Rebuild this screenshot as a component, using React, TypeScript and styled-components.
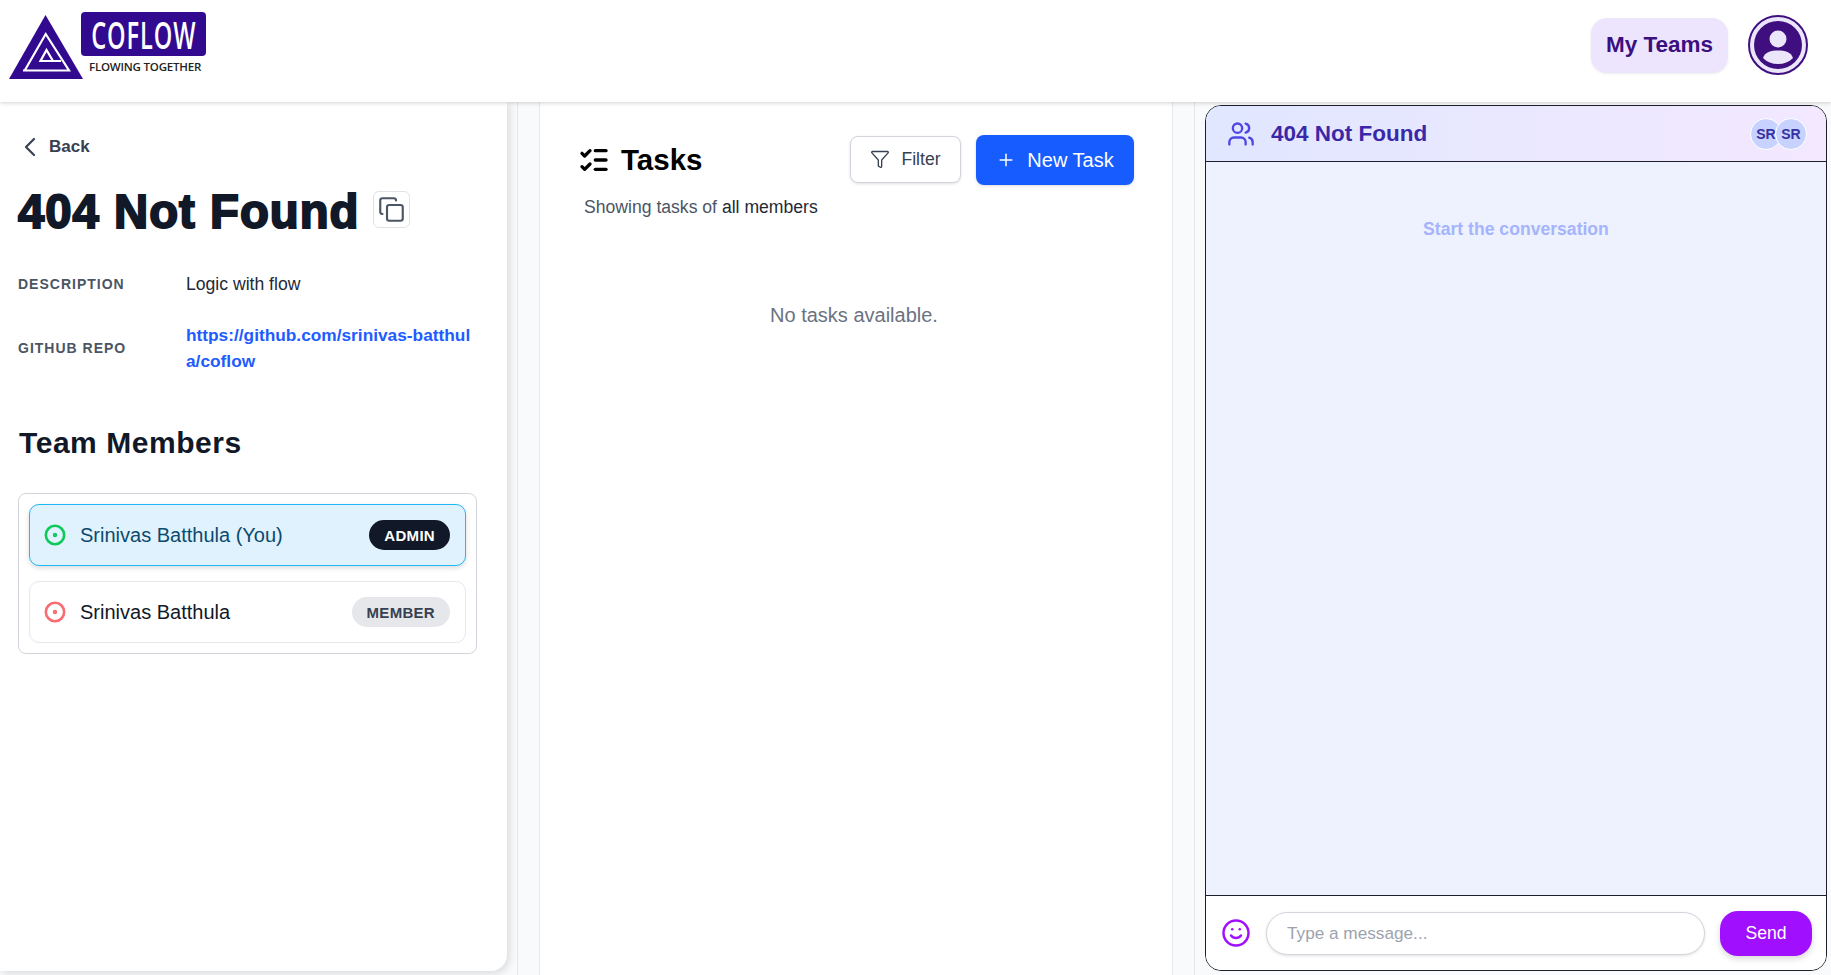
import React from "react";
import styled, { createGlobalStyle } from "styled-components";
import { ChevronLeft, Copy, CircleDot, ListChecks, Funnel, Plus, Users, Smile } from "lucide-react";

const Global = createGlobalStyle`
  html, body { margin: 0; padding: 0; height: 100%; }
  body { font-family: "Liberation Sans", Arial, sans-serif; background: #fff; overflow: hidden; }
  * { box-sizing: border-box; }
`;

const Page = styled.div`
  width: 1831px;
  height: 975px;
  display: flex;
  flex-direction: column;
  overflow: hidden;
`;

const NavBar = styled.header`
  height: 102px;
  flex: none;
  display: flex;
  align-items: flex-start;
  justify-content: space-between;
  padding: 12px 23px 0 9px;
  background: #fff;
  box-shadow: 0 1px 4px rgba(0, 0, 0, 0.18);
  position: relative;
  z-index: 3;
`;

const Logo = styled.div`
  display: flex;
  align-items: flex-start;
`;

const LogoMark = styled.svg`
  width: 74px;
  height: 66px;
  margin-top: 3px;
  flex: none;
`;

const LogoWords = styled.div`
  display: flex;
  flex-direction: column;
  margin-left: -2px;
`;

const LogoPlate = styled.div`
  width: 125px;
  height: 44px;
  background: #320a8f;
  border-radius: 4px;
  color: #fff;
  display: flex;
  align-items: center;
  justify-content: center;
`;

const LogoName = styled.span`
  flex: none;
  font-family: "Open Sans", sans-serif;
  font-size: 38px;
  font-weight: 600;
  letter-spacing: 1.5px;
  line-height: 1;
  transform: scaleX(0.62);
  white-space: nowrap;
`;

const LogoTag = styled.span`
  font-family: "Open Sans", sans-serif;
  font-size: 11.5px;
  font-weight: 600;
  color: #222;
  margin: 3px 0 0 8px;
  white-space: nowrap;
  letter-spacing: -0.2px;
`;

const NavActions = styled.div`
  display: flex;
  align-items: center;
  gap: 20px;
  margin-top: 3px;
`;

const TeamsButton = styled.button`
  width: 137px;
  height: 55px;
  border: none;
  border-radius: 16px;
  background: #ede5fd;
  color: #3b0f80;
  font: 700 22.5px "Liberation Sans", Arial, sans-serif;
  box-shadow: 0 1px 3px rgba(0, 0, 0, 0.08);
`;

const AvatarRing = styled.div`
  width: 60px;
  height: 60px;
  border-radius: 50%;
  border: 2px solid #3f0f80;
  background: #ece6fb;
  display: flex;
  align-items: center;
  justify-content: center;
`;

const Body = styled.main`
  flex: 1;
  display: flex;
  min-height: 0;
  background: #f9fafb;
`;

const LeftPanel = styled.aside`
  width: 507px;
  height: 869px;
  flex: none;
  background: #fff;
  border-bottom-right-radius: 16px;
  box-shadow: 2px 2px 8px rgba(0, 0, 0, 0.14);
  padding: 33px 30px 0 18px;
`;

const BackLink = styled.div`
  display: flex;
  align-items: center;
  gap: 3px;
  margin-left: -4px;
  height: 24px;
  color: #374151;
  font-size: 17px;
  font-weight: 700;
  svg { flex: none; }
`;

const TitleRow = styled.div`
  display: flex;
  align-items: center;
  gap: 14px;
  margin-top: 28px;
  height: 50px;
`;

const Title = styled.h1`
  margin: 0;
  font-size: 47.3px;
  font-weight: 700;
  line-height: 50px;
  letter-spacing: 1px;
  color: #111827;
  -webkit-text-stroke: 2px #111827;
  white-space: nowrap;
`;

const CopyButton = styled.button`
  width: 37px;
  height: 37px;
  margin-top: -6px;
  padding: 0;
  display: flex;
  align-items: center;
  justify-content: center;
  background: #fff;
  border: 1px solid #e0e2e7;
  border-radius: 6px;
  color: #4b5563;
`;

const InfoGrid = styled.dl`
  display: grid;
  grid-template-columns: 168px 288px;
  row-gap: 25px;
  align-items: center;
  margin: 34px 0 0;
`;

const InfoLabel = styled.dt`
  font-size: 14px;
  font-weight: 700;
  letter-spacing: 1px;
  color: #4b5563;
`;

const InfoValue = styled.dd`
  margin: 0;
  font-size: 17.6px;
  line-height: 26px;
  color: #1f2937;
`;

const RepoLink = styled.a`
  color: #1d5cff;
  font-size: 17.3px;
  font-weight: 700;
  word-break: break-all;
  text-decoration: none;
`;

const SectionTitle = styled.h2`
  margin: 51px 0 0 1px;
  font-size: 30px;
  line-height: 36px;
  font-weight: 700;
  letter-spacing: 0.55px;
  color: #111827;
`;

const MemberBox = styled.div`
  margin-top: 32px;
  width: 459px;
  padding: 10px;
  border: 1px solid #d1d5db;
  border-radius: 8px;
  display: flex;
  flex-direction: column;
  gap: 15px;
`;

const MemberRow = styled.div<{ $self?: boolean }>`
  height: 62px;
  display: flex;
  align-items: center;
  padding: 0 15px 0 14px;
  border-radius: 10px;
  border: 1px solid ${(p) => (p.$self ? "#22b8f5" : "#e5e7eb")};
  background: ${(p) => (p.$self ? "#e0f2fe" : "#fff")};
  box-shadow: ${(p) => (p.$self ? "0 2px 5px rgba(0,0,0,0.15)" : "none")};
`;

const MemberName = styled.span<{ $self?: boolean }>`
  margin-left: 14px;
  flex: 1;
  font-size: 20px;
  color: ${(p) => (p.$self ? "#0c4a6e" : "#111827")};
`;

const RoleBadge = styled.span<{ $admin?: boolean }>`
  height: 30px;
  padding: 0 15px;
  border-radius: 15px;
  display: flex;
  align-items: center;
  font-size: 15px;
  font-weight: 700;
  letter-spacing: 0.3px;
  background: ${(p) => (p.$admin ? "#111827" : "#e5e7eb")};
  color: ${(p) => (p.$admin ? "#fff" : "#374151")};
`;

const MiddleGutter = styled.section`
  margin-left: 10px;
  width: 678px;
  flex: none;
  padding: 0 21px;
  border-left: 1px solid #e5e7eb;
  border-right: 1px solid #e5e7eb;
`;

const TaskCard = styled.div`
  height: 100%;
  background: #fff;
  border-left: 1px solid #e5e7eb;
  border-right: 1px solid #e5e7eb;
  padding: 33px 38px 0 41px;
`;

const TaskHeader = styled.div`
  display: flex;
  align-items: center;
  justify-content: space-between;
`;

const TaskTitle = styled.h2`
  margin: 0 0 0 -3px;
  display: flex;
  align-items: center;
  gap: 11px;
  font-size: 29.5px;
  font-weight: 700;
  color: #000;
`;

const TaskActions = styled.div`
  display: flex;
  align-items: center;
  gap: 15px;
`;

const FilterButton = styled.button`
  width: 111px;
  height: 47px;
  margin-bottom: 2px;
  display: flex;
  align-items: center;
  justify-content: center;
  gap: 11px;
  background: #fff;
  border: 1px solid #d1d5db;
  border-radius: 8px;
  box-shadow: 0 1px 3px rgba(0, 0, 0, 0.12);
  color: #374151;
  font: 400 17.6px "Liberation Sans", Arial, sans-serif;
`;

const NewTaskButton = styled.button`
  width: 158px;
  height: 50px;
  display: flex;
  align-items: center;
  justify-content: center;
  gap: 11px;
  background: #175cff;
  border: none;
  border-radius: 8px;
  box-shadow: 0 1px 3px rgba(0, 0, 0, 0.15);
  color: #fff;
  font: 400 20px "Liberation Sans", Arial, sans-serif;
`;

const TaskScope = styled.p`
  margin: 12px 0 0 3px;
  font: 400 17.6px/20px "Liberation Sans", Arial, sans-serif;
  color: #4b5563;
`;

const ScopeValue = styled.span`
  color: #1f2937;
`;

const EmptyText = styled.p`
  margin: 86px 0 0;
  padding-right: 7px;
  text-align: center;
  font: 400 20px/24px "Liberation Sans", Arial, sans-serif;
  color: #6b7280;
`;

const ChatColumn = styled.section`
  flex: 1;
  min-width: 0;
  padding: 3px 4px 4px 10px;
`;

const ChatCard = styled.div`
  height: 100%;
  display: flex;
  flex-direction: column;
  background: #fff;
  border: 1px solid #1f1f2b;
  border-radius: 16px;
  overflow: hidden;
`;

const ChatHeader = styled.div`
  height: 56px;
  flex: none;
  display: flex;
  align-items: center;
  padding: 0 19px 0 21px;
  border-bottom: 1px solid #1f1f2b;
  background: linear-gradient(90deg, #e0e7ff, #f3e8ff);
`;

const ChatTitle = styled.h3`
  margin: 0 0 0 16px;
  flex: 1;
  font-size: 22.5px;
  font-weight: 700;
  color: #3b28a8;
`;

const Initials = styled.span`
  width: 32px;
  height: 32px;
  border-radius: 50%;
  border: 1.5px solid #fff;
  background: #c7d2fe;
  color: #3730a3;
  font: 700 14px "Liberation Sans", Arial, sans-serif;
  display: flex;
  align-items: center;
  justify-content: center;
  margin-left: -7px;
`;

const Messages = styled.div`
  flex: 1;
  background: #eef2ff;
  padding-top: 57px;
  text-align: center;
  font-size: 17.6px;
  line-height: 20px;
  font-weight: 700;
  color: #a5b4fc;
`;

const Composer = styled.form`
  height: 75px;
  flex: none;
  display: flex;
  align-items: center;
  padding: 0 14px 0 15px;
  background: #fff;
  border-top: 1px solid #1f1f2b;
`;

const EmojiButton = styled.span`
  display: flex;
  color: #a10fff;
  width: 30px;
  flex: none;
`;

const MessageInput = styled.input`
  margin-left: 15px;
  flex: 1;
  min-width: 0;
  height: 43px;
  padding: 0 20px;
  border: 1px solid #d1d5db;
  border-radius: 22px;
  box-shadow: 0 1px 3px rgba(0, 0, 0, 0.12);
  font: 400 17.2px "Liberation Sans", Arial, sans-serif;
  outline: none;
  &::placeholder { color: #9ca3af; }
`;

const SendButton = styled.button`
  margin-left: 15px;
  width: 92px;
  height: 45px;
  border: none;
  border-radius: 18px;
  background: #a10fff;
  color: #fff;
  box-shadow: 0 3px 6px rgba(0, 0, 0, 0.15);
  font: 400 17.6px "Liberation Sans", Arial, sans-serif;
`;

export default function App() {
  return (
    <Page>
      <Global />
      <NavBar>
        <Logo>
          <LogoMark viewBox="0 0 74 66">
            <polygon points="36.5,0 74,64 0,64" fill="#320a8f" />
            <path d="M14 55.5 H60 L36.7 19 L16 55 M52 46 H31.5 L37.5 35 L44 46" fill="none" stroke="#fff" strokeWidth="2.2" />
          </LogoMark>
          <LogoWords>
            <LogoPlate>
              <LogoName>COFLOW</LogoName>
            </LogoPlate>
            <LogoTag>FLOWING TOGETHER</LogoTag>
          </LogoWords>
        </Logo>
        <NavActions>
          <TeamsButton type="button">My Teams</TeamsButton>
          <AvatarRing>
            <svg width="48" height="48" viewBox="0 0 48 48">
              <circle cx="24" cy="24" r="24" fill="#3f0f80" />
              <circle cx="24" cy="18" r="8.5" fill="#ece6fb" />
              <path d="M9 37 C 11 31 17 29.5 24 29.5 C 31 29.5 37 31 39 37 C 35 41 30 43 24 43 C 18 43 13 41 9 37 Z" fill="#ece6fb" />
            </svg>
          </AvatarRing>
        </NavActions>
      </NavBar>
      <Body>
        <LeftPanel>
          <BackLink>
            <ChevronLeft size={32} strokeWidth={1.6} />
            Back
          </BackLink>
          <TitleRow>
            <Title>404 Not Found</Title>
            <CopyButton type="button" aria-label="Copy">
              <Copy size={27} strokeWidth={1.9} />
            </CopyButton>
          </TitleRow>
          <InfoGrid>
            <InfoLabel>DESCRIPTION</InfoLabel>
            <InfoValue>Logic with flow</InfoValue>
            <InfoLabel>GITHUB REPO</InfoLabel>
            <InfoValue>
              <RepoLink href="#">https://github.com/srinivas-batthula/coflow</RepoLink>
            </InfoValue>
          </InfoGrid>
          <SectionTitle>Team Members</SectionTitle>
          <MemberBox>
            <MemberRow $self>
              <CircleDot size={22} color="#0cc95a" strokeWidth={2.8} />
              <MemberName $self>Srinivas Batthula (You)</MemberName>
              <RoleBadge $admin>ADMIN</RoleBadge>
            </MemberRow>
            <MemberRow>
              <CircleDot size={22} color="#fb6a70" strokeWidth={2.8} />
              <MemberName>Srinivas Batthula</MemberName>
              <RoleBadge>MEMBER</RoleBadge>
            </MemberRow>
          </MemberBox>
        </LeftPanel>
        <MiddleGutter>
          <TaskCard>
            <TaskHeader>
              <TaskTitle>
                <ListChecks size={32} strokeWidth={2.5} />
                Tasks
              </TaskTitle>
              <TaskActions>
                <FilterButton type="button">
                  <Funnel size={20} strokeWidth={1.6} />
                  Filter
                </FilterButton>
                <NewTaskButton type="button">
                  <Plus size={20} strokeWidth={1.8} />
                  New Task
                </NewTaskButton>
              </TaskActions>
            </TaskHeader>
            <TaskScope>
              Showing tasks of <ScopeValue>all members</ScopeValue>
            </TaskScope>
            <EmptyText>No tasks available.</EmptyText>
          </TaskCard>
        </MiddleGutter>
        <ChatColumn>
          <ChatCard>
            <ChatHeader>
              <Users size={28} color="#4f46e5" strokeWidth={2} />
              <ChatTitle>404 Not Found</ChatTitle>
              <Initials>SR</Initials>
              <Initials>SR</Initials>
            </ChatHeader>
            <Messages>Start the conversation</Messages>
            <Composer>
              <EmojiButton>
                <Smile size={30} strokeWidth={2} />
              </EmojiButton>
              <MessageInput placeholder="Type a message..." />
              <SendButton type="button">Send</SendButton>
            </Composer>
          </ChatCard>
        </ChatColumn>
      </Body>
    </Page>
  );
}
